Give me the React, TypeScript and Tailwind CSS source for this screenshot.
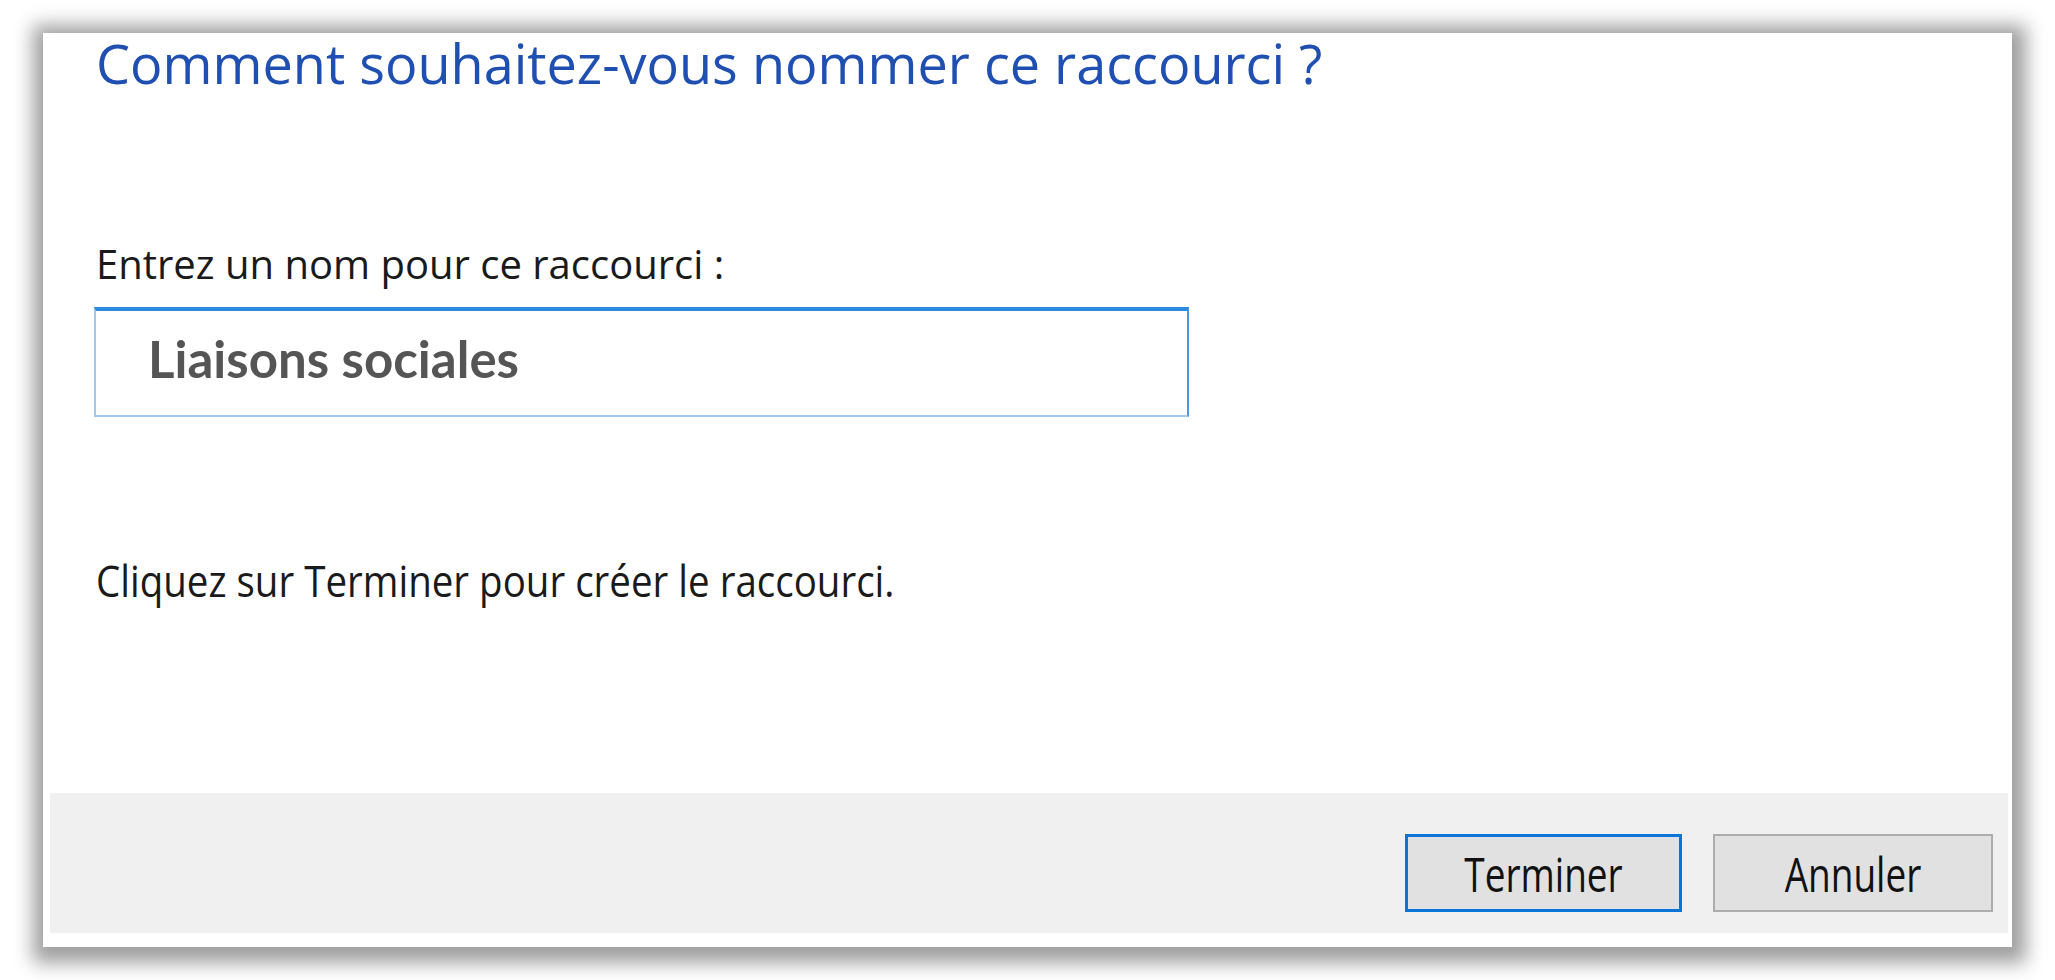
export default function App() {
  return (
    <div className="w-[2055px] h-[980px] bg-white pl-[43px] pt-[33px] font-['Open_Sans',sans-serif]">
      {/* wizard page */}
      <div className="w-[1969px] h-[914px] bg-white shadow-[2px_4px_18px_12px_rgba(0,0,0,0.38)] flex flex-col">
        <div className="flex-1 pl-[53px]">
          <h1 className="pt-[3px] text-[54px] leading-none text-[#1f4fb0]">
            Comment souhaitez-vous nommer ce raccourci ?
          </h1>
          <p className="mt-[154px] text-[40px] leading-none text-[#1a1a1a]">
            Entrez un nom pour ce raccourci :
          </p>
          <div className="ml-[-2px] mt-[23px] w-[1095px] h-[110px] bg-white border-2 border-[#9fcaf0] border-t-[4px] border-t-[#2c8ae0] border-r-[#4a98e4] flex items-center pl-[52px] pb-[10px]">
            <span className="font-['Lato',sans-serif] font-bold text-[51px] leading-none text-[#555555]">
              Liaisons sociales
            </span>
          </div>
          <p className="mt-[144px] text-[38.5px] leading-none text-[#1a1a1a]">
            <span className="inline-block scale-y-[1.15]">Cliquez sur Terminer pour créer le raccourci.</span>
          </p>
        </div>
        {/* button bar */}
        <div className="ml-[7px] mr-[4px] mb-[14px] h-[140px] bg-[#f0f0f0] flex justify-end items-start pt-[41px] pr-[15px] gap-[31px]">
          <button className="w-[277px] h-[78px] bg-[#e1e1e1] border-[3px] border-[#0a74d8] text-[37px] text-[#111] leading-none">
            <span className="inline-block scale-y-[1.3]">Terminer</span>
          </button>
          <button className="w-[280px] h-[78px] bg-[#e1e1e1] border-2 border-[#adadad] text-[37px] text-[#111] leading-none">
            <span className="inline-block scale-y-[1.3]">Annuler</span>
          </button>
        </div>
      </div>
    </div>
  );
}
